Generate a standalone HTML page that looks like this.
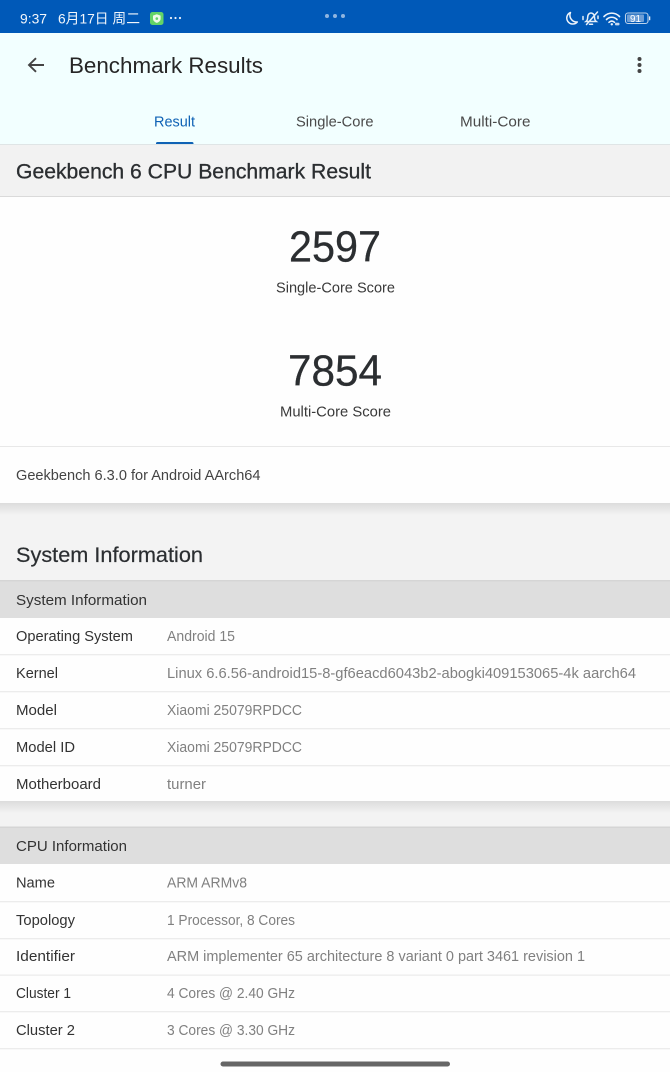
<!DOCTYPE html>
<html><head><meta charset="utf-8"><title>Benchmark Results</title>
<style>
html,body{margin:0;padding:0;width:670px;height:1072px;overflow:hidden;background:#f3f3f3}
svg{display:block;position:absolute;left:0;top:0}
text{font-family:"Liberation Sans","Noto Sans CJK SC",sans-serif}
.l{font-size:14.5px;fill:#333}
.v{font-size:14.5px;fill:#808080}
</style></head><body>
<svg width="670" height="1072" viewBox="0 0 670 1072" xmlns="http://www.w3.org/2000/svg">
<defs>
<linearGradient id="sh" x1="0" y1="0" x2="0" y2="1"><stop offset="0" stop-color="#dcdcdc"/><stop offset="1" stop-color="#f3f3f3"/></linearGradient>
</defs>
<!-- status bar -->
<rect width="670" height="33" fill="#0059b8"/>
<text x="20" y="23.500" font-size="14" fill="#f2f6fb" textLength="27" lengthAdjust="spacingAndGlyphs">9:37</text>
<text x="58" y="23.500" font-size="14" fill="#f2f6fb" textLength="82" lengthAdjust="spacingAndGlyphs">6月17日 周二</text>
<rect x="150" y="12" width="13.500" height="13" rx="2.500" fill="#62d467"/>
<path d="M156.800 14.300l3.800 1.300v3c0 2.200-1.700 3.500-3.800 4.300-2.100-.8-3.800-2.100-3.800-4.300v-3z" fill="#eefbe9"/>
<circle cx="156.800" cy="18.600" r="1.300" fill="#62d467"/>
<g fill="#e8f0fa"><circle cx="171" cy="18" r="1.100"/><circle cx="175.500" cy="18" r="1.100"/><circle cx="180" cy="18" r="1.100"/></g>
<g fill="#8fb5e0"><circle cx="327" cy="16" r="2"/><circle cx="335" cy="16" r="2"/><circle cx="343" cy="16" r="2"/></g>
<!-- moon -->
<path d="M570.500 12.500a6 6 0 1 0 6.800 9.500 6.800 6.800 0 0 1-6.800-9.500z" fill="none" stroke="#eef4fb" stroke-width="1.500" stroke-linejoin="round"/>
<!-- muted bell -->
<g fill="none" stroke="#e6eff9" stroke-width="1.500" stroke-linecap="round">
<path d="M586 21.500c1.300-1 1.700-2 1.700-4.500 0-2.500 1.700-4 3.300-4s3.500 1.500 3.500 4c0 2.500.4 3.500 1.700 4.500z"/>
<path d="M589.500 24.300h3"/><path d="M583 16.500v3"/><path d="M597.500 12l-11 12.500"/><path d="M598 16v2.500"/>
</g>
<!-- wifi -->
<g fill="none" stroke="#eef4fb" stroke-width="1.600" stroke-linecap="round">
<path d="M604 16.500c4.500-4.500 11-4.500 15.500 0"/><path d="M606.500 19.500c3-3 7.500-3 10.500 0"/><path d="M609 22.300c1.700-1.500 3.800-1.500 5.500 0"/>
</g>
<circle cx="611.800" cy="24.300" r="1.200" fill="#eef4fb"/><rect x="615" y="22.800" width="4.500" height="2.600" rx="1" fill="#c6d9ef"/>
<!-- battery -->
<rect x="625.500" y="13" width="22.500" height="10.500" rx="2.500" fill="none" stroke="#bcd2ea" stroke-width="1.100"/>
<rect x="627" y="14.500" width="17" height="7.500" rx="1" fill="#6f9fd6"/>
<rect x="649" y="16.300" width="1.300" height="4" rx=".6" fill="#dfeaf7"/>
<text x="630" y="22" font-size="10" fill="#fff" textLength="11" lengthAdjust="spacingAndGlyphs">91</text>
<!-- app bar -->
<rect y="33" width="670" height="111" fill="#f2ffff"/>
<path d="M44 65H29.500M36 58.200l-7 6.800 7 6.800" fill="none" stroke="#444" stroke-width="1.900"/>
<text x="69" y="73" font-size="22" fill="#262626" textLength="194" lengthAdjust="spacingAndGlyphs">Benchmark Results</text>
<g fill="#444"><circle cx="639.500" cy="59" r="2"/><circle cx="639.500" cy="65" r="2"/><circle cx="639.500" cy="71" r="2"/></g>
<text x="154" y="126.500" font-size="14.500" fill="#0f62b5" textLength="41" lengthAdjust="spacingAndGlyphs">Result</text>
<text x="296" y="126.500" font-size="14.500" fill="#4a4a4a" textLength="77.500" lengthAdjust="spacingAndGlyphs">Single-Core</text>
<text x="460" y="126.500" font-size="14.500" fill="#4a4a4a" textLength="70.500" lengthAdjust="spacingAndGlyphs">Multi-Core</text>
<path d="M156 145v-1.500q0-1.500 1.500-1.500h34.500q1.500 0 1.500 1.500v1.500z" fill="#0f62b5"/>
<rect y="144" width="670" height="1" fill="#dfe5e6"/>
<!-- title band -->
<rect y="145" width="670" height="52" fill="#f2f2f2"/>
<rect y="196" width="670" height="1" fill="#dadada"/>
<text x="16" y="178.500" font-size="21.500" font-weight="400" fill="#2b2e31" stroke="#2b2e31" stroke-width=".3" textLength="355" lengthAdjust="spacingAndGlyphs">Geekbench 6 CPU Benchmark Result</text>
<!-- score card -->
<rect y="503" width="670" height="12" fill="url(#sh)"/>
<rect y="197" width="670" height="306" fill="#fefefe"/>
<text x="289" y="261.500" font-size="44" fill="#2b2e31" stroke="#2b2e31" stroke-width=".3" textLength="92" lengthAdjust="spacingAndGlyphs">2597</text>
<text x="276" y="292.500" font-size="14.500" fill="#3a3a3a" textLength="119" lengthAdjust="spacingAndGlyphs">Single-Core Score</text>
<text x="288" y="385.500" font-size="44" fill="#2b2e31" stroke="#2b2e31" stroke-width=".3" textLength="94" lengthAdjust="spacingAndGlyphs">7854</text>
<text x="280" y="416.500" font-size="14.500" fill="#3a3a3a" textLength="111" lengthAdjust="spacingAndGlyphs">Multi-Core Score</text>
<rect y="446" width="670" height="1" fill="#e8e8e8"/>
<text x="16" y="480" font-size="14.500" fill="#444" textLength="244.500" lengthAdjust="spacingAndGlyphs">Geekbench 6.3.0 for Android AArch64</text>
<!-- system info -->
<text x="16" y="562" font-size="21" fill="#2b2e31" stroke="#2b2e31" stroke-width=".2" textLength="187" lengthAdjust="spacingAndGlyphs">System Information</text>
<rect y="580" width="670" height="38" fill="#dedede"/>
<rect y="580" width="670" height="1.500" fill="#d5d5d5"/>
<text x="16" y="605" class="l" textLength="131" lengthAdjust="spacingAndGlyphs">System Information</text>
<rect y="801" width="670" height="12" fill="url(#sh)"/>
<rect y="618" width="670" height="183" fill="#fefefe"/>
<g fill="#ececec"><rect y="654" width="670" height="1.300"/><rect y="691" width="670" height="1.300"/><rect y="728" width="670" height="1.300"/><rect y="765" width="670" height="1.300"/></g>
<text x="16" y="641" class="l" textLength="117" lengthAdjust="spacingAndGlyphs">Operating System</text>
<text x="167" y="641" class="v" textLength="68" lengthAdjust="spacingAndGlyphs">Android 15</text>
<text x="16" y="678" class="l" textLength="42" lengthAdjust="spacingAndGlyphs">Kernel</text>
<text x="167" y="678" class="v" textLength="469" lengthAdjust="spacingAndGlyphs">Linux 6.6.56-android15-8-gf6eacd6043b2-abogki409153065-4k aarch64</text>
<text x="16" y="715" class="l" textLength="41" lengthAdjust="spacingAndGlyphs">Model</text>
<text x="167" y="715" class="v" textLength="135" lengthAdjust="spacingAndGlyphs">Xiaomi 25079RPDCC</text>
<text x="16" y="752" class="l" textLength="59" lengthAdjust="spacingAndGlyphs">Model ID</text>
<text x="167" y="752" class="v" textLength="135" lengthAdjust="spacingAndGlyphs">Xiaomi 25079RPDCC</text>
<text x="16" y="789" class="l" textLength="85" lengthAdjust="spacingAndGlyphs">Motherboard</text>
<text x="167" y="789" class="v" textLength="39" lengthAdjust="spacingAndGlyphs">turner</text>
<!-- cpu info -->
<rect y="827" width="670" height="37" fill="#dedede"/>
<rect y="826.500" width="670" height="1.500" fill="#d5d5d5"/>
<text x="16" y="851" class="l" textLength="111" lengthAdjust="spacingAndGlyphs">CPU Information</text>
<rect y="864" width="670" height="208" fill="#fefefe"/>
<g fill="#ececec"><rect y="901" width="670" height="1.300"/><rect y="938" width="670" height="1.300"/><rect y="974.500" width="670" height="1.300"/><rect y="1011" width="670" height="1.300"/><rect y="1048" width="670" height="1.300"/></g>
<text x="16" y="887.500" class="l" textLength="39" lengthAdjust="spacingAndGlyphs">Name</text>
<text x="167" y="887.500" class="v" textLength="80" lengthAdjust="spacingAndGlyphs">ARM ARMv8</text>
<text x="16" y="925" class="l" textLength="59" lengthAdjust="spacingAndGlyphs">Topology</text>
<text x="167" y="925" class="v" textLength="128" lengthAdjust="spacingAndGlyphs">1 Processor, 8 Cores</text>
<text x="16" y="961" class="l" textLength="59" lengthAdjust="spacingAndGlyphs">Identifier</text>
<text x="167" y="961" class="v" textLength="418" lengthAdjust="spacingAndGlyphs">ARM implementer 65 architecture 8 variant 0 part 3461 revision 1</text>
<text x="16" y="998" class="l" textLength="55" lengthAdjust="spacingAndGlyphs">Cluster 1</text>
<text x="167" y="998" class="v" textLength="128" lengthAdjust="spacingAndGlyphs">4 Cores @ 2.40 GHz</text>
<text x="16" y="1035" class="l" textLength="59" lengthAdjust="spacingAndGlyphs">Cluster 2</text>
<text x="167" y="1035" class="v" textLength="128" lengthAdjust="spacingAndGlyphs">3 Cores @ 3.30 GHz</text>
<rect x="220.500" y="1061.500" width="229.500" height="5" rx="2.500" fill="#666"/>
</svg>
</body></html>
